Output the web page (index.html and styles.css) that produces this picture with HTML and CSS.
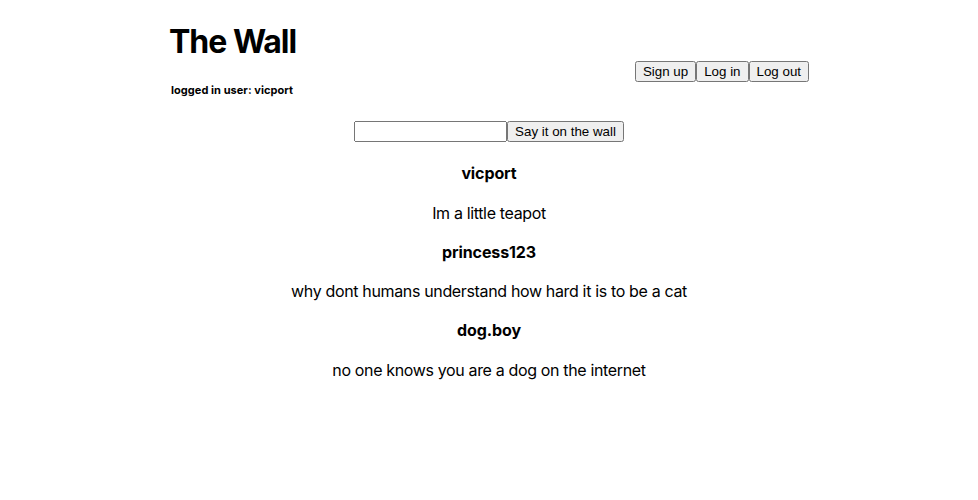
FILE: index.html
```html
<!DOCTYPE html>
<html>
<head>
<meta charset="utf-8">
<link rel="stylesheet" href="styles.css">
</head>
<body>
<div class="app">
  <header class="header">
    <div class="brand">
      <h1 class="title">The Wall</h1>
      <p class="user">logged in user: vicport</p>
    </div>
    <div class="auth">
      <button class="btn">Sign up</button><button class="btn">Log in</button><button class="btn">Log out</button>
    </div>
  </header>
  <form class="compose">
    <input class="field" type="text"><button class="btn" type="button">Say it on the wall</button>
  </form>
  <div class="posts">
    <p class="author">vicport</p>
    <p class="msg">Im a little teapot</p>
    <p class="author">princess123</p>
    <p class="msg">why dont humans understand how hard it is to be a cat</p>
    <p class="author">dog.boy</p>
    <p class="msg">no one knows you are a dog on the internet</p>
  </div>
</div>
</body>
</html>
```
FILE: styles.css
```css
html, body {
  margin: 0;
  padding: 0;
  background: #fff;
}
body {
  font-family: Inter, "Noto Sans", sans-serif;
  color: #000;
}
.app {
  padding: 8px;
}
.header {
  width: 640px;
  margin: 0 auto;
  display: flex;
  justify-content: space-between;
  align-items: flex-start;
}
.title {
  font-size: 32px;
  font-weight: 700;
  margin: 15px 0 0 0;
  line-height: 1.2;
  letter-spacing: -1px;
}
.user {
  font-size: 11px;
  font-weight: 700;
  margin: 22px 0 0 2px;
  letter-spacing: 0.05px;
}
.auth {
  display: flex;
  margin-top: 53px;
}
.btn {
  font-family: "Liberation Sans", Arial, sans-serif;
  font-size: 13.333px;
}
.compose {
  display: flex;
  justify-content: center;
  margin-top: 24px;
}
.field {
  font-family: "Liberation Sans", Arial, sans-serif;
  font-size: 13.333px;
  width: 153px;
  box-sizing: border-box;
}
.posts {
  text-align: center;
  font-size: 16px;
  padding-top: 4px;
}
.posts p {
  margin: 16px 0;
  line-height: 23.25px;
}
.author {
  font-weight: 700;
  letter-spacing: -0.1px;
}
.msg {
  letter-spacing: -0.35px;
}
```
